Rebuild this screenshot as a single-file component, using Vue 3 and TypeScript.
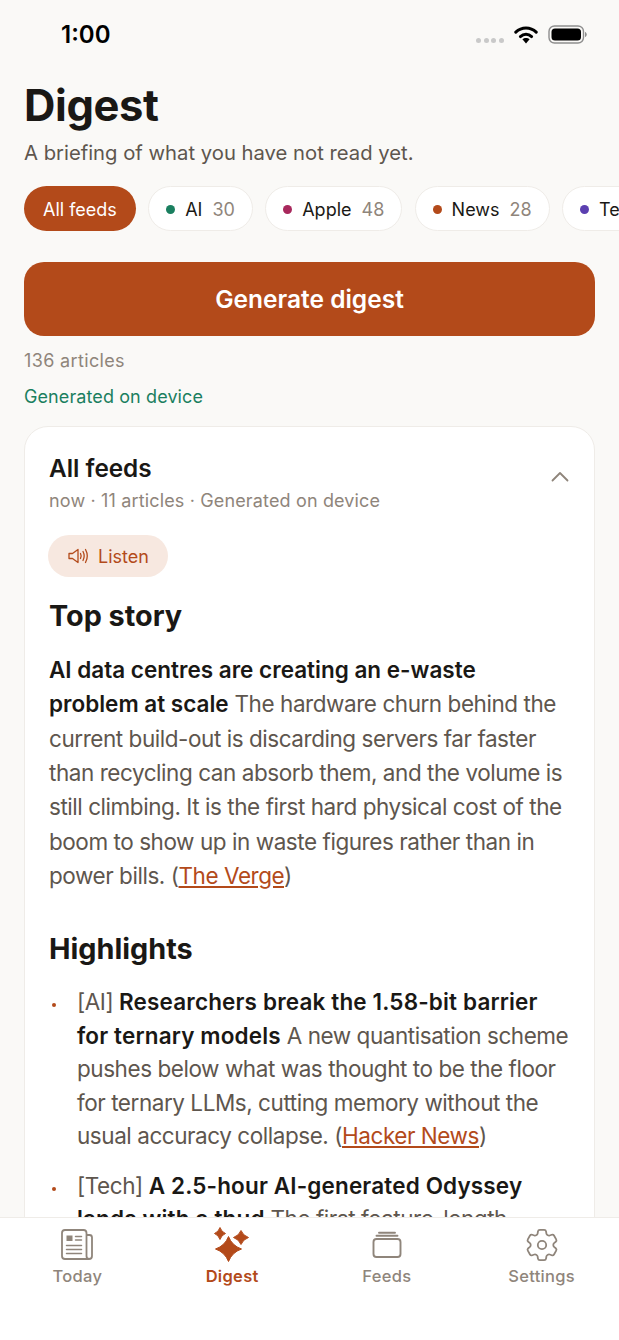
<script setup lang="ts">
interface Chip {
  name: string;
  count: number;
  color: string;
}

const chips: Chip[] = [
  { name: "AI", count: 30, color: "#1a7f5f" },
  { name: "Apple", count: 48, color: "#a8285c" },
  { name: "News", count: 28, color: "#b34a1a" },
  { name: "Tech", count: 30, color: "#5b3fb0" },
];

// four-point sparkle with slightly fat, rounded arms
function sparkle(cx: number, cy: number, rx: number, ry: number): string {
  const kx = rx * 0.27;
  const ky = ry * 0.27;
  return (
    `M${cx} ${cy - ry}Q${cx + kx} ${cy - ky} ${cx + rx} ${cy}` +
    `Q${cx + kx} ${cy + ky} ${cx} ${cy + ry}` +
    `Q${cx - kx} ${cy + ky} ${cx - rx} ${cy}` +
    `Q${cx - kx} ${cy - ky} ${cx} ${cy - ry}Z`
  );
}

const sparkles = [sparkle(17.5, 25, 13, 12.5), sparkle(9, 9.5, 5.5, 6), sparkle(30, 13.5, 7.5, 7)];
</script>

<template>
  <div class="screen">
    <div class="scroller">
      <div class="status">
        <span class="time">1:00</span>
        <div class="status-icons">
          <div class="signal"><i /><i /><i /><i /></div>
          <svg width="24" height="19" viewBox="0 0 24 19">
            <path d="M1.800 7.200C4.500 4.600 8 3 12 3s7.500 1.600 10.200 4.200" fill="none" stroke="#000" stroke-width="3" stroke-linecap="round" />
            <path d="M6.400 11.600C7.900 10.200 9.800 9.300 12 9.300s4.100.9 5.600 2.300" fill="none" stroke="#000" stroke-width="3" stroke-linecap="round" />
            <path d="M12 18.500l-3.600-4.200c1-.8 2.300-1.300 3.600-1.300s2.600.5 3.600 1.300z" />
          </svg>
          <svg width="39" height="19" viewBox="0 0 39 19">
            <rect x="1" y="1" width="34.500" height="17" rx="5.500" fill="none" stroke="#8e8e8e" stroke-width="1.400" />
            <rect x="3.500" y="3.500" width="29.500" height="12" rx="3.500" fill="#000" />
            <path d="M37 7v5c1-.3 1.800-1.300 1.800-2.500S38 7.300 37 7z" fill="#8e8e8e" />
          </svg>
        </div>
      </div>

      <div class="content">
        <h1 class="title">Digest</h1>
        <p class="subtitle">A briefing of what you have not read yet.</p>

        <div class="chips">
          <button class="chip chip--active">All feeds</button>
          <button v-for="chip in chips" :key="chip.name" class="chip">
            <span class="dot" :style="{ background: chip.color }" />
            <span class="chip-name">{{ chip.name }}</span>
            <span class="chip-count">{{ chip.count }}</span>
          </button>
        </div>

        <button class="generate">Generate digest</button>
        <p class="count">136 articles</p>
        <p class="device">Generated on device</p>

        <section class="card">
          <div class="card-head">
            <div>
              <h2 class="card-title">All feeds</h2>
              <p class="card-meta">now · 11 articles · Generated on device</p>
            </div>
            <svg class="chevron" width="18" height="12" viewBox="0 0 18 12">
              <path d="M1.500 10.500L9 3l7.500 7.500" fill="none" stroke="#8f857b" stroke-width="1.800" stroke-linecap="round" stroke-linejoin="round" />
            </svg>
          </div>

          <button class="listen">
            <svg width="22" height="18" viewBox="0 0 22 18" fill="none" stroke="#b34a1a" stroke-width="1.300" stroke-linejoin="round" stroke-linecap="round">
              <path d="M1 6.500h3.500L10 2.500v13l-5.500-4H1z" />
              <path d="M12.500 6.500c.8 1.500.8 3.500 0 5" />
              <path d="M15 4.500c1.400 2.700 1.400 6.300 0 9" />
              <path d="M17.500 2.500c2.200 4 2.200 9 0 13" />
            </svg>
            Listen
          </button>

          <h3 class="heading">Top story</h3>
          <p class="body">
            <b>AI data centres are creating an e-waste problem at scale</b>
            The hardware churn behind the current build-out is discarding servers far faster
            than recycling can absorb them, and the volume is still climbing. It is the first
            hard physical cost of the boom to show up in waste figures rather than in power
            bills. (<a class="link">The Verge</a>)
          </p>

          <h3 class="heading heading--second">Highlights</h3>
          <ul class="list">
            <li class="item">
              [AI] <b>Researchers break the 1.58-bit barrier for ternary models</b>
              A new quantisation scheme pushes below what was thought to be the floor for ternary
              LLMs, cutting memory without the usual accuracy collapse.
              (<a class="link">Hacker News</a>)
            </li>
            <li class="item">
              [Tech] <b>A 2.5-hour AI-generated Odyssey lands with a thud</b>
              The first feature-length
            </li>
          </ul>
        </section>
      </div>
    </div>

    <nav class="tabs">
      <div class="tab">
        <svg width="42" height="42" viewBox="0 0 42 42" fill="none" stroke="#8f857b" stroke-width="1.800" stroke-linejoin="round" stroke-linecap="round">
          <path d="M30.500 11h3a2.500 2.500 0 0 1 2.500 2.500V32a3 3 0 0 1-3 3H9a3 3 0 0 1-3-3V9a3 3 0 0 1 3-3h18.500a3 3 0 0 1 3 3v23a3 3 0 0 0 2.500 3" />
          <rect x="10.500" y="11.500" width="6" height="5.500" fill="#8f857b" stroke="none" />
          <path d="M19.500 12.500h6M19.500 16h6M10.500 21.500h15M10.500 25.500h15M10.500 29.500h15" stroke-width="1.500" />
        </svg>
        <span>Today</span>
      </div>
      <div class="tab tab--active">
        <svg width="42" height="42" viewBox="0 0 42 42" fill="#b34a1a" stroke="#b34a1a" stroke-width="1" stroke-linejoin="round">
          <path v-for="(d, i) in sparkles" :key="i" :d="d" />
        </svg>
        <span>Digest</span>
      </div>
      <div class="tab">
        <svg width="42" height="42" viewBox="0 0 42 42" fill="none" stroke="#8f857b" stroke-width="1.900" stroke-linecap="round">
          <rect x="7.500" y="15" width="27" height="18" rx="3" />
          <path d="M10.500 11.800h21M13 8.700h16" />
        </svg>
        <span>Feeds</span>
      </div>
      <div class="tab">
        <svg width="42" height="42" viewBox="-0.500 -0.500 25 25" fill="none" stroke="#8f857b" stroke-width="1.070" stroke-linecap="round" stroke-linejoin="round">
          <path d="M9.594 3.940c.09-.542.56-.94 1.110-.94h2.593c.55 0 1.020.398 1.110.94l.213 1.281c.063.374.313.686.645.870.074.040.147.083.22.127.325.196.72.257 1.075.124l1.217-.456a1.125 1.125 0 0 1 1.370.49l1.296 2.247a1.125 1.125 0 0 1-.26 1.431l-1.003.827c-.293.241-.438.613-.43.992a7.723 7.723 0 0 1 0 .255c-.008.378.137.75.43.991l1.004.827c.424.35.534.955.26 1.430l-1.298 2.247a1.125 1.125 0 0 1-1.369.491l-1.217-.456c-.355-.133-.75-.072-1.076.124a6.470 6.470 0 0 1-.22.128c-.331.183-.581.495-.644.869l-.213 1.281c-.09.543-.56.94-1.110.94h-2.594c-.55 0-1.019-.398-1.110-.94l-.213-1.281c-.062-.374-.312-.686-.644-.87a6.520 6.520 0 0 1-.22-.127c-.325-.196-.72-.257-1.076-.124l-1.217.456a1.125 1.125 0 0 1-1.369-.49l-1.297-2.247a1.125 1.125 0 0 1 .26-1.431l1.004-.827c.292-.24.437-.613.43-.991a6.932 6.932 0 0 1 0-.255c.007-.38-.138-.751-.43-.992l-1.004-.827a1.125 1.125 0 0 1-.26-1.430l1.297-2.247a1.125 1.125 0 0 1 1.370-.491l1.216.456c.356.133.751.072 1.076-.124.072-.044.146-.086.22-.128.332-.183.582-.495.644-.869l.214-1.280z" />
          <circle cx="12" cy="12" r="2.500" />
        </svg>
        <span>Settings</span>
      </div>
    </nav>
  </div>
</template>

<style scoped>
.screen {
  display: flex;
  flex-direction: column;
  width: 619px;
  height: 1340px;
  overflow: hidden;
  background: #faf9f7;
  color: #1a1815;
  font-family: Inter, "Liberation Sans", sans-serif;
}
.scroller {
  flex: 1;
  min-height: 0;
  overflow: hidden;
}
.status {
  display: flex;
  align-items: center;
  justify-content: space-between;
  height: 68px;
  padding: 0 32px 0 61px;
}
.time {
  font-size: 24px;
  font-weight: 600;
  color: #000;
}
.status-icons {
  display: flex;
  align-items: center;
  gap: 10px;
}
.signal {
  display: flex;
  gap: 2.600px;
  margin-top: 12px;
}
.signal i {
  width: 5px;
  height: 5px;
  border-radius: 50%;
  background: #c9c9c9;
}
.content {
  padding: 13px 24px 0;
}
.title {
  margin: 0;
  font-size: 43.500px;
  line-height: 48px;
  font-weight: 700;
  letter-spacing: -0.4px;
}
.subtitle {
  margin: 10px 0 0;
  font-size: 20.250px;
  line-height: 28px;
  color: #5e564e;
}
.chips {
  display: flex;
  gap: 12.300px;
  margin: 19px -24px 0 0;
  overflow: hidden;
}
.chip {
  display: flex;
  flex: none;
  align-items: center;
  height: 45px;
  padding: 1px 17px 0;
  border: 1px solid #efece8;
  border-radius: 23px;
  background: #fff;
  color: #1a1815;
  font: inherit;
  font-size: 18px;
}
.chip--active {
  padding: 1px 19px 0;
  border: 0;
  background: #b34a1a;
  color: #fff;
}
.dot {
  width: 9px;
  height: 9px;
  margin-right: 10px;
  border-radius: 50%;
}
.chip-count {
  margin-left: 10px;
  color: #8f857b;
}
.generate {
  display: block;
  width: 100%;
  height: 74px;
  margin-top: 31px;
  border: 0;
  border-radius: 20px;
  background: #b34a1a;
  color: #fff;
  font: inherit;
  font-size: 24.500px;
  font-weight: 600;
}
.count {
  margin: 14px 0 0;
  font-size: 18px;
  line-height: 22px;
  letter-spacing: 0.35px;
  color: #8f857b;
}
.device {
  margin: 14px 0 0;
  font-size: 18px;
  line-height: 22px;
  letter-spacing: 0.1px;
  color: #1a7f5f;
}
.card {
  margin-top: 18px;
  padding: 25px 24px 0;
  border: 1px solid #efece8;
  border-radius: 24px;
  background: #fff;
}
.card-head {
  display: flex;
  align-items: center;
  justify-content: space-between;
}
.card-title {
  margin: 0;
  font-size: 24.300px;
  line-height: 32px;
  font-weight: 600;
}
.card-meta {
  margin: 6px 0 0;
  font-size: 18px;
  line-height: 22px;
  letter-spacing: 0.15px;
  color: #8f857b;
}
.chevron {
  margin: 0 1px 12px 0;
}
.listen {
  display: flex;
  align-items: center;
  gap: 8px;
  height: 42px;
  margin: 23px 0 0 -1px;
  padding: 0 19px 0 20px;
  border: 0;
  border-radius: 21px;
  background: #f7e8e0;
  color: #b34a1a;
  font: inherit;
  font-size: 18px;
}
.heading {
  margin: 20px 0 0;
  font-size: 28.800px;
  line-height: 38px;
  font-weight: 700;
}
.heading--second {
  margin-top: 37px;
}
.body {
  margin: 18px 0 0;
  font-size: 22.500px;
  line-height: 34.350px;
  letter-spacing: -0.45px;
  color: #5e564e;
}
.body b,
.item b {
  font-weight: 600;
  letter-spacing: 0;
  color: #1a1815;
}
.item b {
  letter-spacing: 0.15px;
}
.link {
  color: #b34a1a;
  text-decoration: underline;
}
.list {
  margin: 17px 0 0;
  padding: 0;
  list-style: none;
}
.item {
  position: relative;
  margin-bottom: 16px;
  padding-left: 28px;
  font-size: 22.500px;
  line-height: 33.500px;
  letter-spacing: -0.45px;
  color: #5e564e;
}
.item::before {
  content: "";
  position: absolute;
  left: 3px;
  top: 18px;
  width: 4px;
  height: 4px;
  border-radius: 50%;
  background: #b34a1a;
}
.tabs {
  display: grid;
  flex: none;
  grid-template-columns: repeat(4, 1fr);
  height: 123px;
  padding: 6px 0 0;
  box-sizing: border-box;
  border-top: 1px solid #efece8;
  background: #fff;
}
.tab {
  display: flex;
  flex-direction: column;
  align-items: center;
  color: #8f857b;
  font-size: 16.500px;
  font-weight: 500;
  letter-spacing: 0.3px;
}
.tab--active {
  color: #b34a1a;
  font-weight: 600;
}
</style>

<style>
html,
body {
  margin: 0;
  background: #faf9f7;
}
</style>
